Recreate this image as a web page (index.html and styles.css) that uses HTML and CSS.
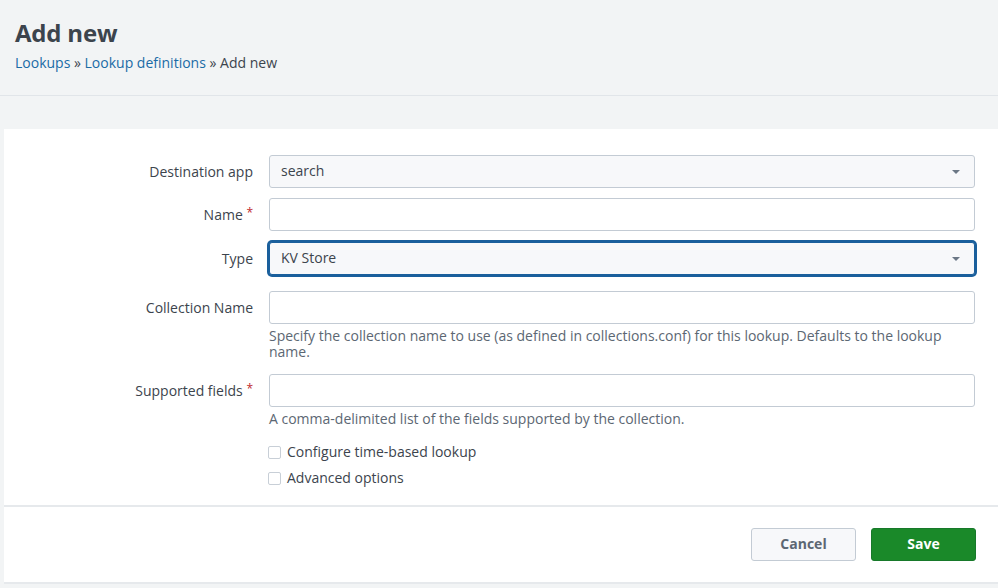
FILE: index.html
```html
<!DOCTYPE html>
<html>
<head>
<meta charset="utf-8">
<link rel="stylesheet" href="styles.css">
</head>
<body>
<div class="header">
  <h1 class="title">Add new</h1>
  <div class="crumbs"><a href="#">Lookups</a> » <a href="#">Lookup definitions</a> » Add new</div>
</div>
<div class="panel">
  <div class="form">
    <div class="row r1">
      <label class="lbl">Destination app</label>
      <div class="ctl"><div class="select">search<span class="caret"></span></div></div>
    </div>
    <div class="row r2">
      <label class="lbl">Name <span class="req">*</span></label>
      <div class="ctl"><div class="input"></div></div>
    </div>
    <div class="row r3">
      <label class="lbl">Type</label>
      <div class="ctl"><div class="select focus">KV Store<span class="caret"></span></div></div>
    </div>
    <div class="row r4">
      <label class="lbl">Collection Name</label>
      <div class="ctl"><div class="input"></div>
        <div class="help">Specify the collection name to use (as defined in collections.conf) for this lookup. Defaults to the lookup name.</div>
      </div>
    </div>
    <div class="row r5">
      <label class="lbl">Supported fields <span class="req">*</span></label>
      <div class="ctl"><div class="input"></div>
        <div class="help">A comma-delimited list of the fields supported by the collection.</div>
      </div>
    </div>
    <div class="row r6">
      <span></span>
      <div class="ctl">
        <div class="check"><span class="box"></span>Configure time-based lookup</div>
        <div class="check"><span class="box"></span>Advanced options</div>
      </div>
    </div>
  </div>
  <div class="footer">
    <button class="btn cancel">Cancel</button>
    <button class="btn save">Save</button>
  </div>
</div>
</body>
</html>
```
FILE: styles.css
```css
html, body { margin: 0; padding: 0; }
body {
  background: #f2f4f5;
  font-family: "Open Sans", "Liberation Sans", sans-serif;
  color: #3c444d;
  font-size: 14px;
  width: 998px;
  height: 588px;
  overflow: hidden;
}
.header {
  height: 96px;
  border-bottom: 1px solid #e1e5e9;
  padding-left: 15px;
  box-sizing: border-box;
}
.title {
  margin: 0;
  padding-top: 17px;
  font-size: 24px;
  line-height: 32px;
  font-weight: 700;
  color: #3c444d;
  letter-spacing: -0.2px;
}
.crumbs {
  margin-top: 5px;
  line-height: 18px;
  font-size: 14px;
  color: #3c444d;
}
.crumbs a { color: #1a6ba6; text-decoration: none; }
.panel {
  margin: 33px 0 0 4px;
  background: #fff;
  border-bottom: 2px solid #e6e9ec;
}
.form {
  padding: 26px 23px 14px 0;
}
.row {
  display: grid;
  grid-template-columns: 249px 1fr;
  column-gap: 16px;
  align-items: start;
}
.r1, .r2 { margin-bottom: 10px; }
.r3 { margin-bottom: 16px; }
.r4 { margin-bottom: 14px; }
.r5 { margin-bottom: 12px; }
.lbl {
  text-align: right;
  line-height: 33px;
  font-size: 14px;
  color: #3c444d;
}
.req { color: #c0282e; font-size: 12px; position: relative; top: -3px; }
.select, .input {
  box-sizing: border-box;
  height: 33px;
  border: 1px solid #c3cbd4;
  border-radius: 3px;
  background: #fff;
  padding-left: 11px;
  line-height: 30px;
  font-size: 14px;
  color: #3c444d;
  position: relative;
}
.select { background: #f7f8fa; }
.select.focus {
  border: 1px solid #1a5f9c;
  box-shadow: 0 0 0 2px #1a5f9c;
}
.caret {
  position: absolute;
  right: 14px;
  top: 14px;
  width: 0; height: 0;
  border-left: 4px solid transparent;
  border-right: 4px solid transparent;
  border-top: 4px solid #6b7785;
}
.help {
  margin-top: 4px;
  line-height: 16px;
  font-size: 14px;
  color: #5c6773;
  padding-right: 30px;
}
.check {
  display: flex;
  align-items: center;
  line-height: 26px;
  font-size: 14px;
  color: #3c444d;
  margin-left: -1px;
}
.box {
  width: 11px; height: 11px;
  border: 1px solid #c8cfd7;
  border-radius: 2px;
  margin-right: 6px;
  background: #fff;
}
.footer {
  border-top: 2px solid #e6e9ec;
  padding: 21px 22px 21px 0;
  display: flex;
  justify-content: flex-end;
  gap: 15px;
}
.btn {
  height: 33px;
  width: 105px;
  padding: 0 0 2px;
  border-radius: 3px;
  font-family: "Open Sans", "Liberation Sans", sans-serif;
  font-size: 14px;
  font-weight: 700;
  cursor: pointer;
}
.cancel {
  background: #f7f8fa;
  border: 1px solid #c3cbd4;
  color: #5c6773;
}
.save {
  background: #1a8929;
  border: 1px solid #17792a;
  color: #fff;
}
```
